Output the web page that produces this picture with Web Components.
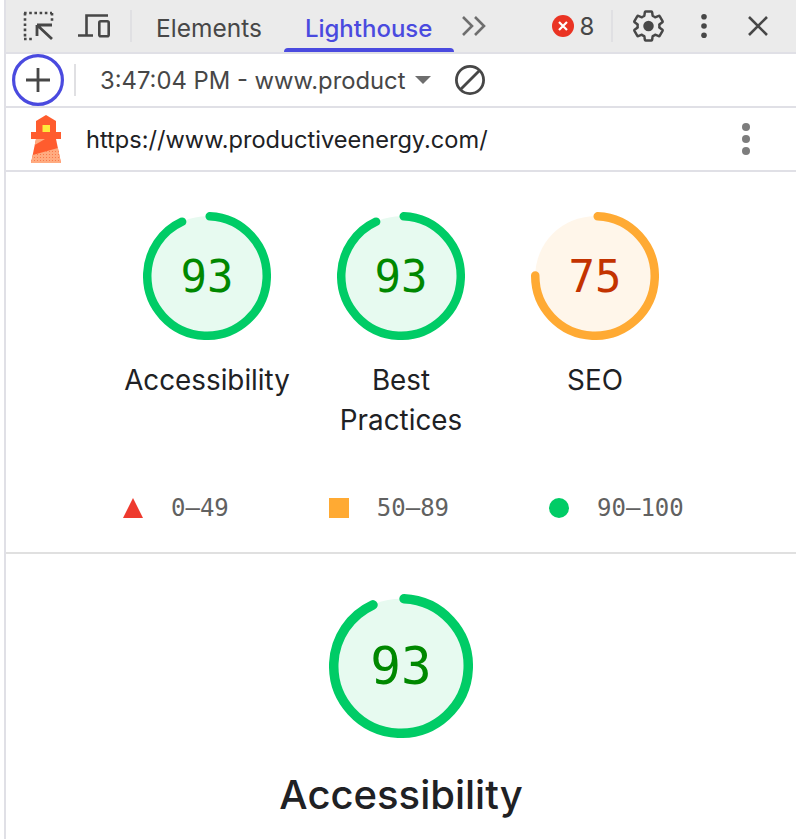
<!DOCTYPE html>
<html lang="en">
<head>
<meta charset="utf-8">
<title>Lighthouse</title>
<style>
  html, body { margin: 0; padding: 0; background: #fff; }
  body { font-family: Inter, "Liberation Sans", sans-serif; }
</style>
</head>
<body>
<lh-panel>
  <dt-toolbar></dt-toolbar>
  <lh-run-bar></lh-run-bar>
  <lh-url-bar>https://www.productiveenergy.com/</lh-url-bar>
  <lh-scores>
    <lh-gauge score="93">Accessibility</lh-gauge>
    <lh-gauge score="93">Best Practices</lh-gauge>
    <lh-gauge score="75">SEO</lh-gauge>
  </lh-scores>
  <lh-legend></lh-legend>
  <lh-category score="93" name="Accessibility"></lh-category>
</lh-panel>

<script>
/**
 * Creates a template from a html string.
 *
 * @param {string} html - The markup.
 * @returns {HTMLTemplateElement} The template.
 */
const makeTemplate = (html) => {
  const template = document.createElement('template')
  template.innerHTML = html
  return template
}

/**
 * Base class, clones the static template into an open shadow root.
 */
class ShadowElement extends HTMLElement {
  /**
   * Creates an instance of the current type.
   */
  constructor () {
    super()
    this.attachShadow({ mode: 'open' })
      .appendChild(this.constructor.template.content.cloneNode(true))
  }
}

customElements.define('lh-panel', class extends ShadowElement {
  static template = makeTemplate(`
    <style>
      :host { display: flex; flex-direction: column; height: 839px; overflow: hidden; box-sizing: border-box; margin-left: 4px; border-left: 2px solid #e0e0e6; }
    </style>
    <slot></slot>
  `)
})

customElements.define('dt-toolbar', class extends ShadowElement {
  static template = makeTemplate(`
    <style>
      :host { display: flex; align-items: center; height: 54px; box-sizing: border-box; background: #ebebeb; border-bottom: 2px solid #e0e0e6; color: #474747; flex: none; }
      svg { display: block; flex: none; }
      .sep { width: 2px; height: 32px; background: #e0e0e3; flex: none; }
      .tab { font-size: 24.5px; height: 52px; box-sizing: border-box; padding-top: 4px; display: flex; align-items: center; position: relative; }
      .tab.on { color: #4a4adf; font-size: 24px; font-weight: 500; }
      .tab.on::after { content: ""; position: absolute; left: 0; right: 0; bottom: 0; height: 4px; background: #4a4adf; border-radius: 4px 4px 0 0; }
      .count { font-size: 24px; margin-left: 5px; width: 16px; }
    </style>
    <svg style="margin-left:16px" width="32" height="32" viewBox="0 0 32 32" fill="none" stroke="#474747" stroke-width="2.6">
      <path d="M2 3h28M3 3v26M30 3v8M2 29h9" stroke-dasharray="2.6 2.6"/>
      <path d="M15 15h15M15 15v11M15 15l15 14" stroke-width="2.8"/>
    </svg>
    <svg style="margin-left:24px" width="32" height="24" viewBox="0 0 32 24" fill="none" stroke="#474747" stroke-width="2.6">
      <path d="M30 1.5H8.5V21M0 21.5h15"/>
      <rect x="21.3" y="7.3" width="9.4" height="15" rx="1.5"/>
    </svg>
    <span class="sep" style="margin-left:20px"></span>
    <span class="tab" style="margin-left:24px">Elements</span>
    <span class="tab on" style="margin-left:22px;padding-left:21px;padding-right:22px">Lighthouse</span>
    <svg style="margin-left:8px" width="24" height="22" viewBox="0 0 24 22" fill="none" stroke="#6e6e6e" stroke-width="2.6">
      <path d="M1 2l9 9-9 9M13 2l9 9-9 9"/>
    </svg>
    <svg style="margin-left:66px" width="22" height="22" viewBox="0 0 22 22">
      <circle cx="11" cy="11" r="11" fill="#ea3323"/>
      <path d="M7 7l8 8M15 7l-8 8" stroke="#fff" stroke-width="2.2"/>
    </svg>
    <span class="count">8</span>
    <span class="sep" style="margin-left:16px"></span>
    <svg style="margin-left:20px" width="31" height="32" viewBox="1.5 1 21 22" fill="none" stroke="#474747" stroke-width="1.7" stroke-linejoin="round">
      <path d="M19.43 12.98c.04-.32.07-.64.07-.98 0-.34-.03-.66-.07-.98l2.11-1.65c.19-.15.24-.42.12-.64l-2-3.46c-.12-.22-.39-.3-.61-.22l-2.49 1c-.52-.4-1.08-.73-1.69-.98l-.38-2.65C14.46 2.18 14.25 2 14 2h-4c-.25 0-.46.18-.49.42l-.38 2.65c-.61.25-1.17.59-1.69.98l-2.49-1c-.23-.09-.49 0-.61.22l-2 3.46c-.13.22-.07.49.12.64l2.11 1.65c-.04.32-.07.65-.07.98 0 .33.03.66.07.98l-2.11 1.65c-.19.15-.24.42-.12.64l2 3.46c.12.22.39.3.61.22l2.49-1c.52.4 1.08.73 1.69.98l.38 2.65c.03.24.24.42.49.42h4c.25 0 .46-.18.49-.42l.38-2.65c.61-.25 1.17-.59 1.69-.98l2.49 1c.23.09.49 0 .61-.22l2-3.46c.12-.22.07-.49-.12-.64l-2.11-1.65z"/>
      <circle cx="12" cy="12" r="3.6" fill="#474747" stroke="none"/>
    </svg>
    <svg style="margin-left:36px" width="8" height="24" viewBox="0 0 8 24" fill="#474747">
      <circle cx="4" cy="2.8" r="2.8"/><circle cx="4" cy="12" r="2.8"/><circle cx="4" cy="21.2" r="2.8"/>
    </svg>
    <svg style="margin-left:40px" width="20" height="20" viewBox="0 0 20 20" fill="none" stroke="#474747" stroke-width="2.6">
      <path d="M1 1l18 18M19 1L1 19"/>
    </svg>
  `)
})

customElements.define('lh-run-bar', class extends ShadowElement {
  static template = makeTemplate(`
    <style>
      :host { display: flex; align-items: center; height: 54px; box-sizing: border-box; border-bottom: 2px solid #e0e0e6; color: #474747; flex: none; }
      svg { display: block; flex: none; }
      .add { margin-left: 6px; }
      .sep { width: 2px; height: 32px; background: #e0e0e3; flex: none; margin-left: 10px; }
      .title { font-size: 23.8px; margin-left: 24px; width: 304px; white-space: nowrap; }
    </style>
    <svg class="add" width="52" height="52" viewBox="0 0 52 52" fill="none">
      <circle cx="26" cy="26" r="24.4" stroke="#4a4adf" stroke-width="3.2"/>
      <path d="M14 26h24M26 14v24" stroke="#474747" stroke-width="2.8"/>
    </svg>
    <span class="sep"></span>
    <span class="title">3:47:04 PM - www.product</span>
    <svg style="margin-left:11px" width="16" height="8" viewBox="0 0 16 8" fill="#6e6e6e"><path d="M0 0h16L8 8z"/></svg>
    <svg style="margin-left:23px" width="32" height="32" viewBox="0 0 32 32" fill="none" stroke="#474747" stroke-width="2.8">
      <circle cx="16" cy="16" r="13.6"/><path d="M6.5 25.5l19-19"/>
    </svg>
  `)
})

customElements.define('lh-url-bar', class extends ShadowElement {
  static template = makeTemplate(`
    <style>
      :host { display: flex; align-items: center; height: 64px; box-sizing: border-box; border-bottom: 2px solid #e0e0e6; color: #202124; font-size: 23.6px; flex: none; }
      svg { display: block; flex: none; }
      .url { margin-left: 25px; flex: 1; }
      .more { margin-right: 46px; }
    </style>
    <svg style="margin-left:25px" width="30" height="48" viewBox="0 0 30 48">
      <defs>
        <pattern id="dots" width="3" height="3" patternUnits="userSpaceOnUse">
          <rect width="1" height="1" fill="#f9794a"/>
        </pattern>
      </defs>
      <path d="M15 0l10 6v12H5V6z" fill="#ff5c2e"/>
      <path d="M0 17h30v7H0z" fill="#ff5c2e"/>
      <path d="M11.500 10H19v7h-7.500z" fill="#ffeb3b"/>
      <path d="M5 24h20l5 24H0z" fill="#ff5c2e"/>
      <path d="M5 24h9L3.700 30z" fill="#ffab80"/>
      <path d="M1.700 40l25.200-7L30 48H0z" fill="#ffab80"/>
      <path d="M1.700 40l25.200-7L30 48H0z" fill="url(#dots)"/>
    </svg>
    <span class="url"><slot></slot></span>
    <svg class="more" width="8" height="32" viewBox="0 0 8 32" fill="#7d7d7d">
      <circle cx="4" cy="4" r="4"/><circle cx="4" cy="16" r="4"/><circle cx="4" cy="28" r="4"/>
    </svg>
  `)
})

const gaugeColours = (score) => score >= 90
  ? { arc: '#00cc66', text: '#008800', fill: '#e7faf0' }
  : score >= 50
    ? { arc: '#ffaa33', text: '#c33300', fill: '#fff6ea' }
    : { arc: '#ff3333', text: '#cc0000', fill: '#ffeeee' }

customElements.define('lh-dial', class extends ShadowElement {
  static template = makeTemplate(`
    <style>
      :host { display: inline-grid; justify-items: center; align-items: center; }
      svg, .num { grid-area: 1 / 1; }
      svg { display: block; }
      .num { font-family: "DejaVu Sans Mono", monospace; }
    </style>
    <svg><circle class="bg"></circle><circle class="arc"></circle></svg>
    <span class="num"></span>
  `)

  /**
   * Draws the dial from the given values.
   *
   * @param {number} score - The score, 0 to 100.
   * @param {number} size - Outer diameter.
   * @param {number} stroke - Width of the arc.
   * @param {number} font - Font size of the number.
   */
  draw (score, size, stroke, font) {
    const colours = gaugeColours(score)
    const r = (size - stroke) / 2
    const length = 2 * Math.PI * r
    const svg = this.shadowRoot.querySelector('svg')
    svg.setAttribute('width', size)
    svg.setAttribute('height', size)
    const bg = this.shadowRoot.querySelector('.bg')
    const arc = this.shadowRoot.querySelector('.arc')
    for (const circle of [bg, arc]) {
      circle.setAttribute('cx', size / 2)
      circle.setAttribute('cy', size / 2)
      circle.setAttribute('r', r)
    }
    bg.setAttribute('fill', colours.fill)
    arc.setAttribute('fill', 'none')
    arc.setAttribute('stroke', colours.arc)
    arc.setAttribute('stroke-width', stroke)
    arc.setAttribute('stroke-linecap', 'round')
    // The arc starts a little after twelve o'clock so the round cap stays clear of the top
    const startAngle = 2.6
    const endLength = length * score / 100 - length * startAngle / 360
    arc.setAttribute('stroke-dasharray', `${endLength} ${length}`)
    arc.setAttribute('transform', `rotate(${startAngle - 90} ${size / 2} ${size / 2})`)
    const num = this.shadowRoot.querySelector('.num')
    num.textContent = score
    num.style.color = colours.text
    num.style.fontSize = font + 'px'
  }
})

customElements.define('lh-gauge', class extends ShadowElement {
  static template = makeTemplate(`
    <style>
      :host { display: flex; flex-direction: column; align-items: center; width: 194px; }
      .label { font-size: 27.8px; line-height: 40px; color: #202124; text-align: center; margin-top: 20px; width: 176px; }
    </style>
    <lh-dial></lh-dial>
    <div class="label"><slot></slot></div>
  `)

  /**
   * Called after the element is inserted into the DOM.
   */
  connectedCallback () {
    this.shadowRoot.querySelector('lh-dial').draw(Number(this.getAttribute('score')), 128, 8.500, 44)
  }
})

customElements.define('lh-scores', class extends ShadowElement {
  static template = makeTemplate(`
    <style>
      :host { display: flex; justify-content: center; box-sizing: border-box; padding-top: 40px; flex: none; height: 264px; }
    </style>
    <slot></slot>
  `)
})

customElements.define('lh-legend', class extends ShadowElement {
  static template = makeTemplate(`
    <style>
      :host { display: flex; align-items: center; height: 118px; padding-top: 28px; box-sizing: border-box; border-bottom: 2px solid #e0e0e0; color: #616161; font: 24px "DejaVu Sans Mono", monospace; flex: none; }
      svg { display: block; flex: none; }
      span { margin-left: 28px; }
    </style>
    <svg style="margin-left:117px" width="20" height="20" viewBox="0 0 20 20"><path d="M10 0l10 20H0z" fill="#ee3a2e"/></svg>
    <span>0–49</span>
    <svg style="margin-left:100px" width="20" height="20" viewBox="0 0 20 20"><rect width="20" height="20" fill="#ffaa33"/></svg>
    <span>50–89</span>
    <svg style="margin-left:100px" width="20" height="20" viewBox="0 0 20 20"><circle cx="10" cy="10" r="10" fill="#00cc66"/></svg>
    <span>90–100</span>
  `)
})

customElements.define('lh-category', class extends ShadowElement {
  static template = makeTemplate(`
    <style>
      :host { display: flex; flex-direction: column; align-items: center; padding-top: 40px; }
      .name { font-size: 40px; font-weight: 500; line-height: 50px; color: #202124; margin-top: 32px; }
    </style>
    <lh-dial></lh-dial>
    <div class="name"></div>
  `)

  /**
   * Called after the element is inserted into the DOM.
   */
  connectedCallback () {
    this.shadowRoot.querySelector('lh-dial').draw(Number(this.getAttribute('score')), 144, 9.500, 51)
    this.shadowRoot.querySelector('.name').textContent = this.getAttribute('name')
  }
})
</script>
</body>
</html>
